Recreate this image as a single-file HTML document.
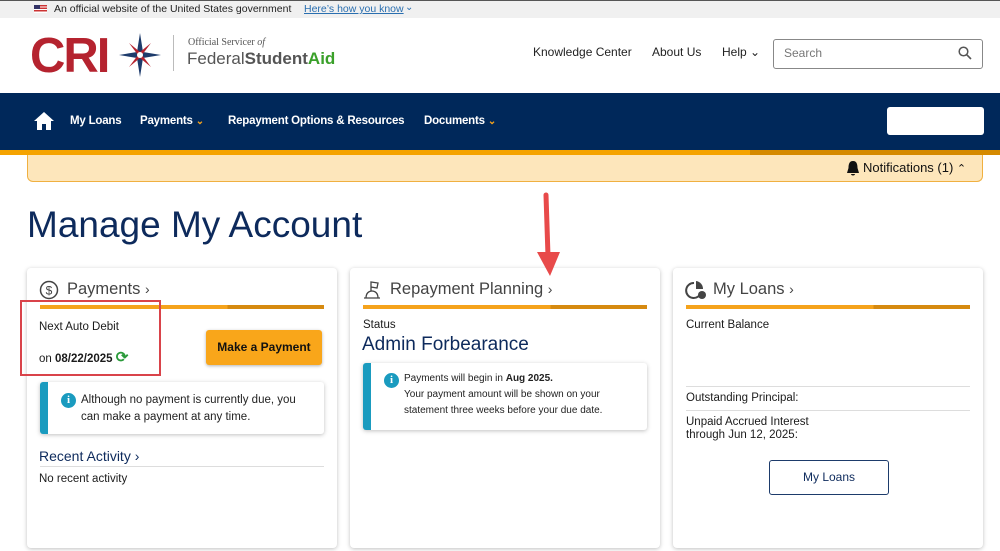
<!DOCTYPE html>
<html><head><meta charset="utf-8"><style>
*{margin:0;padding:0;box-sizing:border-box}
body{width:1000px;height:551px;overflow:hidden;background:#fff;font-family:"Liberation Sans",sans-serif;position:relative;color:#1b1b1b}
.a{position:absolute;white-space:nowrap}
.card{position:absolute;top:268px;height:280px;width:310px;background:#fff;border-radius:4px;box-shadow:0 1px 4px rgba(0,0,0,.25)}
.bar{position:absolute;left:13px;right:13px;top:37px;height:4px;background:linear-gradient(90deg,#f5a31c 0,#f5a31c 66%,#d68a10 66%)}
.ch{position:absolute;left:40px;top:12px;font-size:16.5px;color:#444}
.info{position:absolute;background:#fff;box-shadow:0 1px 4px rgba(0,0,0,.25);border-left:8px solid #1a9bbf;border-radius:3px}
.ic{position:absolute;width:15px;height:15px;border-radius:50%;background:#1a9bbf;color:#fff;font-size:11px;font-weight:bold;text-align:center;line-height:15px;font-family:"Liberation Serif",serif}
.nav{color:#fff;font-weight:bold;font-size:11.5px;top:115px;letter-spacing:-0.2px}
.car{color:#f5a31c;font-size:10px}
</style></head><body>
<div class="a" style="left:0;top:0;width:1000px;height:18px;background:#f0f0f0;border-top:1px solid #555"></div>
<div class="a" style="left:34px;top:5px;width:13px;height:8px;background:repeating-linear-gradient(#c33 0 1.3px,#fff 1.3px 2.6px)"><div style="width:6px;height:4px;background:#336"></div></div>
<div class="a" style="left:54px;top:3px;font-size:10.5px;color:#222">An official website of the United States government</div>
<div class="a" style="left:304px;top:3px;font-size:10.5px;color:#2a6fb0;text-decoration:underline">Here’s how you know</div>
<div class="a" style="left:405px;top:2px;font-size:10px;color:#2a6fb0">⌄</div>

<div class="a" style="left:30px;top:28px;font-size:49px;font-weight:bold;color:#b5232f;letter-spacing:-2px">CRI</div>
<svg class="a" style="left:119px;top:33px" width="42" height="44" viewBox="0 0 42 44">
<polygon points="21,0 24,19 42,22 24,25 21,44 18,25 0,22 18,19" fill="#1d3b6b"/>
<polygon points="10,10 21,19 32,10 23,22 32,34 21,25 10,34 19,22" fill="#b5232f"/>
<circle cx="21" cy="22" r="3" fill="#fff"/></svg>
<div class="a" style="left:173px;top:35px;width:1px;height:36px;background:#bbb"></div>
<div class="a" style="left:188px;top:37px;font-size:10px;color:#555;font-family:'Liberation Serif',serif">Official Servicer <i>of</i></div>
<div class="a" style="left:187px;top:49px;font-size:17px;color:#555">Federal<b>Student</b><b style="color:#3aa02a">Aid</b></div>

<div class="a" style="left:533px;top:45px;font-size:12px;color:#222">Knowledge Center</div>
<div class="a" style="left:652px;top:45px;font-size:12px;color:#222">About Us</div>
<div class="a" style="left:722px;top:45px;font-size:12px;color:#222">Help ⌄</div>
<div class="a" style="left:773px;top:39px;width:210px;height:30px;border:1px solid #888;border-radius:3px"></div>
<div class="a" style="left:784px;top:46px;font-size:12px;color:#777">Search</div>
<svg class="a" style="left:958px;top:46px" width="14" height="14"><circle cx="5.5" cy="5.5" r="4.3" stroke="#555" stroke-width="1.5" fill="none"/><line x1="8.7" y1="8.7" x2="13" y2="13" stroke="#555" stroke-width="1.6"/></svg>

<div class="a" style="left:0;top:93px;width:1000px;height:57px;background:#00285a"></div>
<svg class="a" style="left:34px;top:112px" width="20" height="18" viewBox="0 0 20 18"><path d="M10 0 L20 9 L17 9 L17 18 L12 18 L12 12 L8 12 L8 18 L3 18 L3 9 L0 9Z" fill="#fff"/></svg>
<div class="a nav" style="left:70px">My Loans</div>
<div class="a nav" style="left:140px">Payments <span class="car">⌄</span></div>
<div class="a nav" style="left:228px">Repayment Options &amp; Resources</div>
<div class="a nav" style="left:424px">Documents <span class="car">⌄</span></div>
<div class="a" style="left:887px;top:107px;width:97px;height:28px;background:#fff;border-radius:3px"></div>
<div class="a" style="left:0;top:150px;width:1000px;height:5px;background:linear-gradient(90deg,#f5a300 0,#f5a300 750px,#d58a00 750px)"></div>

<div class="a" style="left:27px;top:155px;width:956px;height:27px;background:#fde6bb;border:1px solid #f0b040;border-top:none;border-radius:0 0 6px 6px"></div>
<svg class="a" style="left:846px;top:160px" width="14" height="17" viewBox="0 0 14 17"><path d="M7 1 C3 1 2.5 5 2.5 8 L1 13 L13 13 L11.5 8 C11.5 5 11 1 7 1Z M5 14 L9 14 C9 16 5 16 5 14Z" fill="#111"/></svg>
<div class="a" style="left:863px;top:160px;font-size:13px;color:#111">Notifications (1) <span style="font-size:11px">⌃</span></div>

<div class="a" style="left:27px;top:204px;font-size:37px;color:#0d2a5c">Manage My Account</div>

<div class="card" style="left:27px">
<svg class="a" style="left:12px;top:12px" width="20" height="20"><circle cx="10" cy="10" r="8.5" stroke="#444" stroke-width="1.5" fill="none"/><text x="10" y="14.5" font-size="12" text-anchor="middle" fill="#444" font-family="Liberation Sans">$</text></svg>
<div class="ch">Payments <span style="font-size:14px">›</span></div><div class="bar"></div>
<div class="a" style="left:12px;top:53px;font-size:11.5px">Next Auto Debit</div>
<div class="a" style="left:12px;top:80px;font-size:11.5px">on <b>08/22/2025</b> <span style="color:#2a9a3a;font-size:15px;font-weight:bold">⟳</span></div>
<div class="a" style="left:179px;top:62px;width:116px;height:35px;background:#f9a61a;border-radius:3px;box-shadow:0 1px 3px rgba(0,0,0,.3);font-size:12px;font-weight:bold;text-align:center;line-height:35px;color:#111">Make a Payment</div>
<div class="info" style="left:13px;top:114px;width:284px;height:52px">
<div class="ic" style="left:13px;top:11px">i</div>
<div class="a" style="left:33px;top:10px;font-size:11.5px;line-height:17px;color:#222">Although no payment is currently due, you<br>can make a payment at any time.</div></div>
<div class="a" style="left:12px;top:180px;font-size:14px;color:#0d2a5c">Recent Activity <span>›</span></div>
<div class="a" style="left:13px;top:198px;width:284px;height:1px;background:#ddd"></div>
<div class="a" style="left:12px;top:205px;font-size:11.5px">No recent activity</div>
</div>

<div class="card" style="left:350px">
<svg class="a" style="left:12px;top:12px" width="20" height="20"><path d="M2 18 L18 18 M4 18 C4 13 7 11 10 11 C13 11 16 13 16 18 M9 11 L9 2 L16 3 L15 8 L9 7" stroke="#444" stroke-width="1.3" fill="none"/></svg>
<div class="ch">Repayment Planning <span style="font-size:14px">›</span></div><div class="bar"></div>
<div class="a" style="left:13px;top:51px;font-size:11.5px">Status</div>
<div class="a" style="left:12px;top:66px;font-size:19px;color:#0d2a5c">Admin Forbearance</div>
<div class="info" style="left:13px;top:95px;width:284px;height:67px">
<div class="ic" style="left:13px;top:10px">i</div>
<div class="a" style="left:33px;top:8px;font-size:10px;line-height:16px;color:#222">Payments will begin in <b>Aug 2025.</b><br>Your payment amount will be shown on your<br>statement three weeks before your due date.</div></div>
</div>

<div class="card" style="left:673px">
<svg class="a" style="left:12px;top:12px" width="22" height="20"><path d="M9 3 A7.5 7.5 0 1 0 16 12" stroke="#444" stroke-width="2" fill="none"/><path d="M11 1 L11 9 L18 9 A8 8 0 0 0 11 1Z" fill="#444"/><circle cx="17" cy="15" r="4" fill="#444"/></svg>
<div class="ch">My Loans <span style="font-size:14px">›</span></div><div class="bar"></div>
<div class="a" style="left:13px;top:51px;font-size:11.5px">Current Balance</div>
<div class="a" style="left:13px;top:118px;width:284px;height:1px;background:#ddd"></div>
<div class="a" style="left:13px;top:124px;font-size:11.5px">Outstanding Principal:</div>
<div class="a" style="left:13px;top:142px;width:284px;height:1px;background:#ddd"></div>
<div class="a" style="left:13px;top:148px;font-size:11.5px;line-height:13px">Unpaid Accrued Interest<br>through Jun 12, 2025:</div>
<div class="a" style="left:96px;top:192px;width:120px;height:35px;border:1.5px solid #1d3b6b;border-radius:3px;font-size:12px;color:#0d2a5c;text-align:center;line-height:32px">My Loans</div>
</div>

<div class="a" style="left:20px;top:300px;width:141px;height:76px;border:2px solid #d9434a"></div>
<svg class="a" style="left:535px;top:192px" width="30" height="88"><line x1="11" y1="3" x2="13" y2="64" stroke="#e84a4a" stroke-width="5" stroke-linecap="round"/><polygon points="2,60 25,60 15,84" fill="#e84a4a"/></svg>
</body></html>
